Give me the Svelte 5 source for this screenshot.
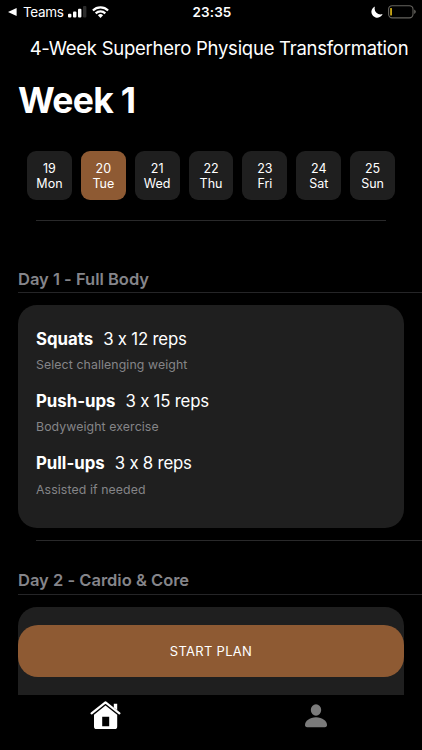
<script>
    // Days shown in the week picker
    const days = [
        { date: 19, name: "Mon" },
        { date: 20, name: "Tue" },
        { date: 21, name: "Wed" },
        { date: 22, name: "Thu" },
        { date: 23, name: "Fri" },
        { date: 24, name: "Sat" },
        { date: 25, name: "Sun" }
    ];

    // Workouts of the week, day 2 continues below the fold
    const workouts = [
        {
            title: "Day 1 - Full Body",
            exercises: [
                { name: "Squats", reps: "3 x 12 reps", note: "Select challenging weight" },
                { name: "Push-ups", reps: "3 x 15 reps", note: "Bodyweight exercise" },
                { name: "Pull-ups", reps: "3 x 8 reps", note: "Assisted if needed" }
            ]
        },
        { title: "Day 2 - Cardio & Core", exercises: [] }
    ];

    let selected = $state(20);
</script>

<div class="screen">
    <div class="status">
        <div class="carrier">
            <svg class="back" width="9" height="8" viewBox="0 0 9 8"><path d="M0 4 8.6 0v8z" /></svg>
            <span class="app-name">Teams</span>
            <svg class="signal" width="19" height="12" viewBox="0 0 19 12">
                <rect x="0" y="7.8" width="3.4" height="3.8" rx="1" />
                <rect x="5" y="5.6" width="3.4" height="6" rx="1" />
                <rect x="10" y="2.8" width="3.4" height="8.8" rx="1" />
                <rect x="15" y="0" width="3.4" height="11.6" rx="1" fill="#2c2c2c" />
            </svg>
            <svg class="wifi" width="17" height="12" viewBox="0 0 17 12">
                <g fill="none" stroke="#fff" stroke-width="2.2">
                    <path d="M.9 4.5a10.9 10.9 0 0 1 15.2 0" />
                    <path d="M3.7 7.4a6.9 6.9 0 0 1 9.6 0" />
                </g>
                <path d="M8.5 12 5.9 9.3a3.8 3.8 0 0 1 5.2 0z" />
            </svg>
        </div>
        <span class="time">23:35</span>
        <div class="power">
            <svg width="12" height="12" viewBox="0 0 12 12">
                <path d="M4 .5A5.8 5.8 0 1 0 11.6 8 5.9 5.9 0 0 1 4 .5z" />
            </svg>
            <svg width="28" height="14" viewBox="0 0 28 14">
                <rect x=".6" y=".7" width="24.4" height="12.2" rx="3.6" fill="none" stroke="#66645f" stroke-width="1.1" />
                <rect x="2.3" y="3" width="1.5" height="7.6" rx=".6" fill="#f5cc1b" />
                <path d="M26.2 4.6q1.6.7 1.6 2.2t-1.6 2.2z" fill="#66645f" />
            </svg>
        </div>
    </div>

    <header>4-Week Superhero Physique Transformation</header>

    <main>
        <h1>Week 1</h1>

        <div class="days">
            {#each days as day}
                <button class="day" class:active={day.date === selected} onclick={() => (selected = day.date)}>
                    <span>{day.date}</span>
                    <span>{day.name}</span>
                </button>
            {/each}
        </div>

        <hr class="week-line" />

        {#each workouts as workout}
            <section>
                <h2>{workout.title}</h2>
                <ul>
                    {#each workout.exercises as exercise}
                        <li>
                            <h3><strong>{exercise.name}</strong><span>{exercise.reps}</span></h3>
                            <p>{exercise.note}</p>
                        </li>
                    {/each}
                </ul>
                <hr />
            </section>
        {/each}

        <button class="start">START PLAN</button>
    </main>

    <nav>
        <a href="#home" aria-label="Home">
            <svg width="32" height="29" viewBox="0 0 32 29">
                <path d="M1.600 12.400 15.500 1.400l13.900 11" fill="none" stroke="#fff" stroke-width="2.200" stroke-linecap="round" stroke-linejoin="round" />
                <path d="M23.800 2.800h3.400v6.400l-3.400-2.700z" />
                <path fill-rule="evenodd" d="M15.500 4.600 27.200 13.800V25.500a2.600 2.600 0 0 1-2.600 2.600H6.600a2.600 2.600 0 0 1-2.600-2.600V13.800zM12.200 15.800V25.300h7v-9.500z" />
            </svg>
        </a>
        <a href="#profile" aria-label="Profile">
            <svg class="person" width="22" height="24" viewBox="0 0 22 24">
                <ellipse cx="11" cy="6" rx="5.2" ry="5.7" />
                <path d="M0 21c0-3.900 4.600-7.700 11-7.700s11 3.800 11 7.700c0 1.400-.8 2.200-2.200 2.200H2.200C.8 23.200 0 22.400 0 21z" />
            </svg>
        </a>
    </nav>
</div>

<style>
    :global(body) {
        margin: 0;
        background: #000;
    }
    .screen {
        display: flex;
        flex-direction: column;
        width: 422px;
        height: 750px;
        overflow: hidden;
        background: #000;
        color: #fff;
        font-family: Inter, "Liberation Sans", sans-serif;
        /* keeps the x in "3 x 12" a plain letter */
        font-feature-settings: "calt" 0;
    }
    svg {
        display: block;
        fill: #fff;
    }
    button {
        border: none;
        padding: 0;
        color: #fff;
        font-family: inherit;
    }

    /* STATUS BAR */
    .status {
        display: grid;
        grid-template-columns: 1fr auto 1fr;
        align-items: center;
        height: 24px;
        padding: 0 6px 0 8px;
    }
    .carrier {
        display: flex;
        align-items: center;
    }
    .app-name {
        margin: 0 5px 0 6px;
        font-size: 13.5px;
        letter-spacing: -0.35px;
    }
    .wifi {
        margin-left: 5px;
    }
    .time {
        font-size: 13.5px;
        font-weight: 600;
        letter-spacing: 0.1px;
    }
    .power {
        display: flex;
        align-items: center;
        justify-content: flex-end;
        gap: 5px;
    }

    header {
        height: 48px;
        padding-left: 16px;
        font-size: 18.5px;
        line-height: 48px;
        letter-spacing: -0.25px;
        text-align: center;
        white-space: nowrap;
    }

    main {
        position: relative;
        height: 623px;
        overflow: hidden;
    }
    h1 {
        margin: 0;
        padding: 8px 18px 0;
        font-size: 35.5px;
        font-weight: 700;
        line-height: 42px;
        letter-spacing: -0.7px;
    }
    .days {
        display: flex;
        gap: 9px;
        margin: 29px 27px 0;
    }
    .day {
        display: flex;
        flex: 1;
        flex-direction: column;
        align-items: center;
        justify-content: center;
        height: 49px;
        border-radius: 9px;
        background: #1f1f1f;
        font-size: 12.5px;
        line-height: 15px;
    }
    .day.active {
        background: #8e5a33;
    }
    hr {
        height: 1px;
        margin: 12px 0 0 36px;
        border: none;
        background: #29292a;
    }
    .week-line {
        margin: 20px 36px 39px;
    }

    /* WORKOUTS */
    h2 {
        margin: 0 0 0 18px;
        padding-top: 7px;
        border-bottom: 1px solid #252527;
        color: #85858a;
        font-size: 16.5px;
        font-weight: 600;
        line-height: 25px;
    }
    ul {
        box-sizing: border-box;
        height: 223px;
        margin: 12px 18px 0;
        padding: 22.6px 18px 0;
        border-radius: 19px;
        background: #1f1f1f;
        list-style: none;
    }
    li {
        height: 62.4px;
    }
    h3 {
        display: flex;
        gap: 10px;
        margin: 0;
        font-size: 16.8px;
        font-weight: 400;
        line-height: 22px;
        letter-spacing: -0.2px;
    }
    strong {
        font-weight: 700;
        letter-spacing: 0;
    }
    p {
        margin: 7.4px 0 0;
        color: #858588;
        font-size: 12.3px;
        line-height: 16px;
        letter-spacing: 0.1px;
    }
    section + section {
        margin-top: 21px;
    }
    section + section h2 {
        padding: 6px 0 1px;
    }

    /* Button floats over the scrolled list */
    .start {
        position: absolute;
        right: 18px;
        bottom: 18px;
        left: 18px;
        height: 52px;
        border-radius: 20px;
        background: #8e5a33;
        font-size: 13px;
        letter-spacing: 0.3px;
    }

    nav {
        display: grid;
        grid-template-columns: 1fr 1fr;
        justify-items: center;
        align-items: start;
        height: 49px;
        padding-top: 6px;
    }
    nav a:last-child {
        margin-top: 3px;
        margin-right: 1px;
    }
    .person {
        fill: #7b7b7b;
    }
</style>
